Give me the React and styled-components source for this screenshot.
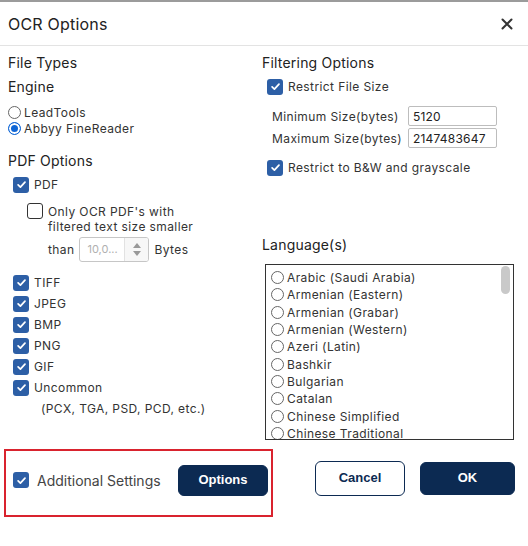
import React from "react";
import styled, { createGlobalStyle } from "styled-components";

const GlobalStyle = createGlobalStyle`
  html, body {
    margin: 0;
    padding: 0;
    background: #fff;
  }
  body {
    font-family: Inter, "Open Sans", "Liberation Sans", sans-serif;
    color: #333;
  }
  * { box-sizing: border-box; }
`;

const NAVY = "#0c2a52";
const BLUE = "#2d5fa6";

// first entries of the engine's language list; the box only shows what fits
const LANGUAGES = [
  "Arabic (Saudi Arabia)", "Armenian (Eastern)", "Armenian (Grabar)", "Armenian (Western)",
  "Azeri (Latin)", "Bashkir", "Bulgarian", "Catalan", "Chinese Simplified", "Chinese Traditional",
  "Chuvash",
];

const FILE_TYPES = ["TIFF", "JPEG", "BMP", "PNG", "GIF"];

const Dialog = styled.div`
  width: 528px;
  height: 546px;
  border-top: 2px solid #9b9b9b;
  background: #fff;
  display: flex;
  flex-direction: column;
`;

const Header = styled.header`
  height: 44px;
  display: flex;
  align-items: center;
  justify-content: space-between;
  padding: 0 14px 0 8px;
  border-bottom: 1px solid #e3e3e3;
`;

const Title = styled.h1`
  margin: 0;
  font-size: 16px;
  font-weight: 400;
  letter-spacing: 0.2px;
  color: #222;
`;

const CloseButton = styled.button`
  border: 0;
  background: none;
  padding: 0;
  width: 14px;
  height: 14px;
  display: flex;
  align-items: center;
  justify-content: center;
`;

const Body = styled.div`
  display: grid;
  grid-template-columns: 254px 1fr;
  padding: 8px 14px 0 8px;
  height: 403px;
`;

const Column = styled.div`
  display: flex;
  flex-direction: column;
`;

const Heading = styled.h2`
  margin: ${(p) => p.$mt || 0}px 0 0;
  font-size: 14px;
  line-height: 18px;
  font-weight: 400;
  letter-spacing: 0.2px;
  color: #222;
`;

const RadioRow = styled.label`
  display: flex;
  align-items: center;
  gap: 3px;
  height: 16px;
  font-size: 12px;
  letter-spacing: 0.4px;
  color: #333;
`;

const RadioDot = styled.span`
  width: 13px;
  height: 13px;
  border-radius: 50%;
  flex: none;
  border: ${(p) => (p.$on ? `1px solid #0f66d6` : "1px solid #666")};
  background: ${(p) => (p.$on ? "#0f66d6" : "#fff")};
  box-shadow: ${(p) => (p.$on ? "inset 0 0 0 2px #fff" : "none")};
`;

const Box = styled.span`
  width: 16px;
  height: 16px;
  flex: none;
  border-radius: 3px;
  display: flex;
  align-items: center;
  justify-content: center;
  background: ${(p) => (p.$on ? BLUE : "#fff")};
  border: ${(p) => (p.$on ? "none" : "1.5px solid #333")};
`;

function Check({ on }) {
  return (
    <Box $on={on}>
      {on && (
        <svg width="11" height="11" viewBox="0 0 12 12">
          <path d="M2.3 6.4 L4.8 8.8 L9.8 3.4" fill="none" stroke="#fff" strokeWidth="1.9" strokeLinecap="round" strokeLinejoin="round" />
        </svg>
      )}
    </Box>
  );
}

const CheckRow = styled.label`
  display: flex;
  align-items: center;
  gap: 5px;
  height: 21px;
  margin: ${(p) => p.$mt || 0}px 0 0 ${(p) => p.$indent || 5}px;
  font-size: 12px;
  letter-spacing: 0.4px;
  color: #333;
`;

const Nested = styled.div`
  display: flex;
  gap: 5px;
  margin: 8px 0 0 19px;
  font-size: 12px;
  letter-spacing: 0.4px;
  line-height: 15px;
  color: #333;
`;

const NestedText = styled.div`
  padding-top: 1px;
`;

const ThanRow = styled.div`
  display: flex;
  align-items: center;
  gap: 5px;
  margin-top: 3px;
`;

const Spinner = styled.div`
  width: 70px;
  height: 25px;
  border: 1px solid #c6c6c6;
  border-radius: 3px;
  display: flex;
  overflow: hidden;
`;

const SpinValue = styled.span`
  flex: 1;
  padding-left: 7px;
  display: flex;
  align-items: center;
  color: #b0b0b0;
  font-size: 11px;
  letter-spacing: 0;
`;

const SpinArrows = styled.span`
  width: 24px;
  border-left: 1px solid #e2e2e2;
  background: #f7f7f7;
  display: flex;
  flex-direction: column;
  align-items: center;
  justify-content: center;
  gap: 3px;
`;

const Hint = styled.div`
  margin-left: 33px;
  height: 21px;
  display: flex;
  align-items: center;
  font-size: 12px;
  letter-spacing: 0.4px;
  color: #333;
`;

const SizeGrid = styled.div`
  display: grid;
  grid-template-columns: 136px 89px;
  grid-auto-rows: 20px;
  row-gap: 2px;
  align-items: center;
  margin: 9px 0 0 10px;
  font-size: 12px;
  letter-spacing: 0.4px;
  color: #333;
`;

const SizeInput = styled.input`
  width: 89px;
  height: 20px;
  border: 1px solid #bdbdbd;
  border-radius: 2px;
  padding: 0 4px;
  font: inherit;
  font-size: 12px;
  letter-spacing: 0.2px;
  color: #222;
`;

const LangFrame = styled.div`
  position: relative;
  margin-top: 10px;
  margin-left: 3px;
  height: 176px;
  border: 1px solid #333;
  overflow: hidden;
`;

const LangList = styled.div`
  height: 100%;
  overflow: hidden;
  padding: 4px 16px 0 5px;
`;

const ScrollThumb = styled.span`
  position: absolute;
  top: 1px;
  right: 3px;
  width: 9px;
  height: 28px;
  border-radius: 5px;
  background: #c9c9c9;
`;

const LangRow = styled(RadioRow)`
  height: 17.3px;
`;

const Footer = styled.footer`
  display: flex;
  align-items: flex-start;
  padding: 0 13px 0 4px;
`;

const Highlight = styled.div`
  width: 269px;
  height: 68px;
  border: 2px solid #d9232e;
  display: flex;
  align-items: center;
  padding: 0 3px 6px 7px;
`;

const AdditionalLabel = styled.label`
  display: flex;
  align-items: center;
  gap: 8px;
  font-size: 14px;
  color: #444;
  flex: 1;
`;

const Button = styled.button`
  width: ${(p) => p.$w || 90}px;
  height: ${(p) => p.$h || 31}px;
  border-radius: 6px;
  font-family: "Liberation Sans", Arial, sans-serif;
  font-weight: 700;
  font-size: 13px;
  cursor: pointer;
  background: ${(p) => (p.$outline ? "#fff" : NAVY)};
  color: ${(p) => (p.$outline ? NAVY : "#fff")};
  border: 1px solid ${NAVY};
  padding: 0 0 2px;
`;

const Actions = styled.div`
  margin-left: auto;
  margin-top: 12px;
  display: flex;
  align-items: center;
  gap: 15px;
`;

export default function App() {
  return (
    <>
      <GlobalStyle />
      <Dialog>
        <Header>
          <Title>OCR Options</Title>
          <CloseButton aria-label="Close">
            <svg width="12" height="12" viewBox="0 0 12 12">
              <path d="M1.5 1.5 L10.5 10.5 M10.5 1.5 L1.5 10.5" stroke="#333" strokeWidth="2" strokeLinecap="round" />
            </svg>
          </CloseButton>
        </Header>

        <Body>
          <Column>
            <Heading>File Types</Heading>
            <Heading $mt={6}>Engine</Heading>
            <div style={{ marginTop: 8 }}>
              <RadioRow><RadioDot />LeadTools</RadioRow>
              <RadioRow><RadioDot $on />Abbyy FineReader</RadioRow>
            </div>
            <Heading $mt={16}>PDF Options</Heading>
            <CheckRow $mt={4}><Check on />PDF</CheckRow>
            <Nested>
              <Check />
              <NestedText>
                Only OCR PDF's with<br />
                filtered text size smaller
                <ThanRow>
                  than
                  <Spinner>
                    <SpinValue>10,0...</SpinValue>
                    <SpinArrows>
                      <svg width="8" height="5" viewBox="0 0 8 5"><path d="M4 0 L8 5 L0 5 Z" fill="#999" /></svg>
                      <svg width="8" height="5" viewBox="0 0 8 5"><path d="M0 0 L8 0 L4 5 Z" fill="#999" /></svg>
                    </SpinArrows>
                  </Spinner>
                  Bytes
                </ThanRow>
              </NestedText>
            </Nested>
            <div style={{ marginTop: 10 }}>
              {FILE_TYPES.map((t) => (
                <CheckRow key={t}><Check on />{t}</CheckRow>
              ))}
              <CheckRow><Check on />Uncommon</CheckRow>
              <Hint>(PCX, TGA, PSD, PCD, etc.)</Hint>
            </div>
          </Column>

          <Column>
            <Heading>Filtering Options</Heading>
            <CheckRow $mt={4}><Check on />Restrict File Size</CheckRow>
            <SizeGrid>
              <span>Minimum Size(bytes)</span>
              <SizeInput defaultValue="5120" />
              <span>Maximum Size(bytes)</span>
              <SizeInput defaultValue="2147483647" />
            </SizeGrid>
            <CheckRow $mt={9}><Check on />Restrict to B&amp;W and grayscale</CheckRow>
            <Heading $mt={58}>Language(s)</Heading>
            <LangFrame>
              <LangList>
                {LANGUAGES.map((l) => (
                  <LangRow key={l}><RadioDot />{l}</LangRow>
                ))}
              </LangList>
              <ScrollThumb />
            </LangFrame>
          </Column>
        </Body>

        <Footer>
          <Highlight>
            <AdditionalLabel><Check on />Additional Settings</AdditionalLabel>
            <Button>Options</Button>
          </Highlight>
          <Actions>
            <Button $outline $h={35}>Cancel</Button>
            <Button $w={95} $h={33}>OK</Button>
          </Actions>
        </Footer>
      </Dialog>
    </>
  );
}
